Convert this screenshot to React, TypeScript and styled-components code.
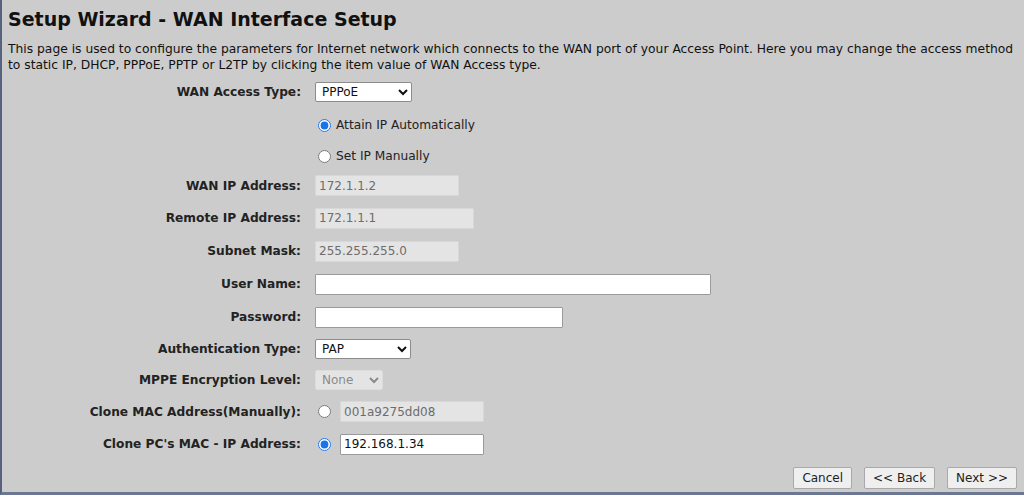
import styled, { createGlobalStyle } from 'styled-components';

const GlobalStyle = createGlobalStyle`
  html, body {
    margin: 0;
    padding: 0;
    background: #cccccc;
  }
  body {
    font-family: "DejaVu Sans", Verdana, sans-serif;
    color: #000;
  }
`;

// page frame with the dark strip on the left and bottom
const Page = styled.div`
  width: 1024px;
  height: 495px;
  box-sizing: border-box;
  background: #cccccc;
  border-left: 2px solid #56627e;
  border-bottom: 3px solid #6c7893;
  padding: 7px 7px 0 6px;
  overflow: hidden;
`;

const Title = styled.h1`
  margin: 0;
  font-size: 19px;
  font-weight: bold;
  line-height: 24px;
  color: #111;
`;

const Intro = styled.p`
  margin: 10px 0 3px 0;
  font-family: "DejaVu Sans", Verdana, sans-serif;
  font-size: 12.3px;
  line-height: 16px;
  color: #111;
`;

const Form = styled.div`
  display: flex;
  flex-direction: column;
`;

const Row = styled.div<{ $h?: number }>`
  display: grid;
  grid-template-columns: 293px 1fr;
  column-gap: 14px;
  align-items: center;
  height: ${(p) => p.$h ?? 33}px;
`;

const Label = styled.div`
  text-align: right;
  font-weight: bold;
  font-size: 12.2px;
  color: #222;
  white-space: nowrap;
`;

const Field = styled.div`
  display: flex;
  align-items: center;
  gap: 8px;
  font-size: 12px;
  color: #222;
`;

const TextBox = styled.input<{ $w: number }>`
  box-sizing: border-box;
  width: ${(p) => p.$w}px;
  height: 21px;
  margin: 0;
  padding: 1px 3px;
  font-family: "DejaVu Sans", Verdana, sans-serif;
  font-size: 12px;
  color: #111;
  background: #fff;
  border: 1px solid #9a9a9a;
  border-radius: 1px;
  outline: none;

  &:disabled {
    background: #e4e4e4;
    color: #6d6d6d;
    border-color: #d8d8d8;
  }
`;

const Select = styled.select<{ $w: number }>`
  box-sizing: border-box;
  width: ${(p) => p.$w}px;
  height: 20px;
  margin: 0;
  padding: 0 2px;
  font-family: "DejaVu Sans", Verdana, sans-serif;
  font-size: 12px;
  color: #111;
  background: #fff;
  border: 1px solid #8c8c8c;
  border-radius: 2px;

  &:disabled {
    background: #e4e4e4;
    color: #8a8a8a;
    border-color: #dcdcdc;
    opacity: 1;
  }
`;

const Radio = styled.input.attrs({ type: 'radio' })`
  width: 13px;
  height: 13px;
  margin: 0 1px 0 3px;
  accent-color: #1a73e8;
`;

const RadioLabel = styled.label`
  display: flex;
  align-items: center;
  gap: 4px;
  font-size: 12.2px;
  color: #222;
`;

const Buttons = styled.div`
  display: flex;
  justify-content: flex-end;
  gap: 12px;
  margin-top: 7px;
`;

const Button = styled.button`
  box-sizing: border-box;
  height: 22px;
  padding: 0 8px;
  font-family: "DejaVu Sans", Verdana, sans-serif;
  font-size: 12px;
  color: #222;
  background: #efefef;
  border: 1px solid #a9a9a9;
  border-radius: 2px;
`;

export default function App() {
  return (
    <Page>
      <GlobalStyle />
      <Title>Setup Wizard - WAN Interface Setup</Title>
      <Intro>
        This page is used to configure the parameters for Internet network which connects to the WAN port of your
        Access Point. Here you may change the access method to static IP, DHCP, PPPoE, PPTP or L2TP by clicking the
        item value of WAN Access type.
      </Intro>

      <Form>
        <Row $h={32}>
          <Label>WAN Access Type:</Label>
          <Field>
            <Select $w={97} defaultValue="pppoe">
              <option value="static">Static IP</option>
              <option value="dhcp">DHCP</option>
              <option value="pppoe">PPPoE</option>
              <option value="pptp">PPTP</option>
              <option value="l2tp">L2TP</option>
            </Select>
          </Field>
        </Row>
        <Row $h={34}>
          <span />
          <RadioLabel>
            <Radio name="ipmode" defaultChecked />
            Attain IP Automatically
          </RadioLabel>
        </Row>
        <Row $h={28}>
          <span />
          <RadioLabel>
            <Radio name="ipmode" />
            Set IP Manually
          </RadioLabel>
        </Row>
        <Row $h={31}>
          <Label>WAN IP Address:</Label>
          <Field>
            <TextBox $w={144} defaultValue="172.1.1.2" disabled />
          </Field>
        </Row>
        <Row $h={34}>
          <Label>Remote IP Address:</Label>
          <Field>
            <TextBox $w={159} defaultValue="172.1.1.1" disabled />
          </Field>
        </Row>
        <Row $h={32}>
          <Label>Subnet Mask:</Label>
          <Field>
            <TextBox $w={144} defaultValue="255.255.255.0" disabled />
          </Field>
        </Row>
        <Row $h={34}>
          <Label>User Name:</Label>
          <Field>
            <TextBox $w={396} defaultValue="" />
          </Field>
        </Row>
        <Row $h={32}>
          <Label>Password:</Label>
          <Field>
            <TextBox $w={248} type="password" defaultValue="" />
          </Field>
        </Row>
        <Row $h={32}>
          <Label>Authentication Type:</Label>
          <Field>
            <Select $w={96} defaultValue="pap">
              <option value="pap">PAP</option>
              <option value="chap">CHAP</option>
              <option value="mschap">MS-CHAP</option>
            </Select>
          </Field>
        </Row>
        <Row $h={30}>
          <Label>MPPE Encryption Level:</Label>
          <Field>
            <Select $w={68} defaultValue="none" disabled>
              <option value="none">None</option>
            </Select>
          </Field>
        </Row>
        <Row $h={33}>
          <Label>Clone MAC Address(Manually):</Label>
          <Field>
            <Radio name="clone" />
            <TextBox $w={144} defaultValue="001a9275dd08" disabled />
          </Field>
        </Row>
        <Row $h={32}>
          <Label>Clone PC's MAC - IP Address:</Label>
          <Field>
            <Radio name="clone" defaultChecked />
            <TextBox $w={144} defaultValue="192.168.1.34" />
          </Field>
        </Row>
      </Form>

      <Buttons>
        <Button>Cancel</Button>
        <Button>&lt;&lt; Back</Button>
        <Button>Next &gt;&gt;</Button>
      </Buttons>
    </Page>
  );
}
